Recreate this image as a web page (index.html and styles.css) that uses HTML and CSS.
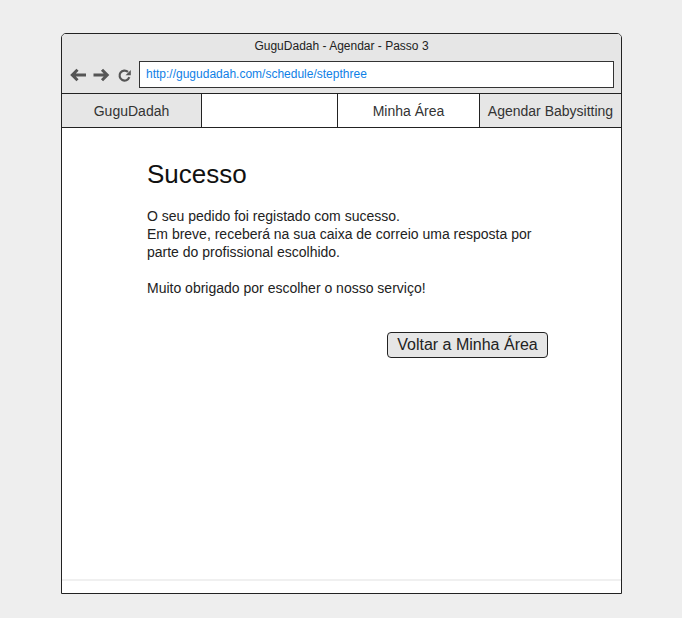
FILE: index.html
```html
<!DOCTYPE html>
<html lang="pt">
<head>
<meta charset="utf-8">
<title>GuguDadah - Agendar - Passo 3</title>
<link rel="stylesheet" href="styles.css">
</head>
<body>
<div class="window">
  <div class="titlebar">
    <div class="title">GuguDadah - Agendar - Passo 3</div>
    <div class="toolbar">
      <div class="icons">
        <svg class="ico" width="18" height="16" viewBox="0 0 18 16"><path d="M17 8H3.5M8.5 2.8L3.3 8L8.5 13.2" fill="none" stroke="#555" stroke-width="3"/></svg>
        <svg class="ico" width="18" height="16" viewBox="0 0 18 16"><path d="M0.5 8H14M9 2.8L14.2 8L9 13.2" fill="none" stroke="#555" stroke-width="3"/></svg>
        <svg class="ico" width="16" height="16" viewBox="0 0 16 16"><path d="M12.3 10.2A5 5 0 1 1 11 4.9" fill="none" stroke="#555" stroke-width="2.2"/><path d="M13.8 3V8.2H8.6Z" fill="#555"/></svg>
      </div>
      <div class="url">http://gugudadah.com/schedule/stepthree</div>
    </div>
  </div>
  <nav class="nav">
    <div class="cell c1 gray">GuguDadah</div>
    <div class="cell c2"></div>
    <div class="cell c3">Minha Área</div>
    <div class="cell c4 gray">Agendar Babysitting</div>
  </nav>
  <main class="content">
    <div class="column">
      <h1 class="heading">Sucesso</h1>
      <p class="message">O seu pedido foi registado com sucesso.<br>Em breve, receberá na sua caixa de correio uma resposta por parte do profissional escolhido.<br><br>Muito obrigado por escolher o nosso serviço!</p>
      <div class="actions"><button class="btn">Voltar a Minha Área</button></div>
    </div>
  </main>
  <div class="footer"></div>
</div>
</body>
</html>
```
FILE: styles.css
```css
* { box-sizing: border-box; }
html, body { margin: 0; padding: 0; }
body {
  background: #eeeeee;
  font-family: "Liberation Sans", Arial, sans-serif;
  color: #222;
  width: 682px;
  height: 618px;
  overflow: hidden;
}
.window {
  margin: 33px 0 0 61px;
  width: 561px;
  height: 561px;
  border: 1px solid #222;
  border-radius: 5px 5px 0 0;
  background: #fff;
  display: flex;
  flex-direction: column;
  overflow: hidden;
}
.titlebar {
  height: 59px;
  background: #e6e6e6;
  display: flex;
  flex-direction: column;
}
.title {
  padding-top: 4px;
  font-size: 12px;
  line-height: 16px;
  text-align: center;
  color: #222;
}
.toolbar {
  margin-top: 7px;
  display: flex;
  align-items: center;
  padding-right: 7px;
}
.icons {
  width: 77px;
  display: flex;
  align-items: center;
  padding-left: 7px;
  gap: 6px;
  height: 27px;
  padding-top: 1px;
}
.ico { display: block; }
.url {
  flex: 1;
  height: 27px;
  border: 1px solid #333;
  background: #fff;
  color: #0f7fe6;
  font-size: 12px;
  line-height: 25px;
  padding-left: 6px;
}
.nav {
  display: flex;
  height: 35px;
  border-top: 1px solid #222;
  border-bottom: 1px solid #222;
}
.cell {
  font-size: 14px;
  color: #333;
  display: flex;
  align-items: center;
  justify-content: center;
  background: #fff;
}
.cell.gray { background: #e6e6e6; }
.c1 { width: 140px; border-right: 1px solid #222; }
.c2 { width: 136px; border-right: 1px solid #222; }
.c3 { width: 142px; border-right: 1px solid #222; }
.c4 { flex: 1; }
.content {
  flex: 1;
  padding-top: 31px;
}
.column {
  margin-left: 85px;
  width: 401px;
}
.heading {
  margin: 0;
  font-size: 26px;
  line-height: 30px;
  font-weight: normal;
  color: #111;
}
.message {
  margin: 18px 0 0;
  font-size: 14px;
  line-height: 18px;
  color: #222;
}
.actions {
  margin-top: 35px;
  display: flex;
  justify-content: flex-end;
}
.btn {
  width: 161px;
  height: 26px;
  padding: 0;
  font-family: "Liberation Sans", Arial, sans-serif;
  font-size: 16px;
  color: #222;
  background: #e6e6e6;
  border: 1px solid #222;
  border-radius: 4px;
}
.footer {
  height: 14px;
  border-top: 2px solid #f0f0f0;
}
```
